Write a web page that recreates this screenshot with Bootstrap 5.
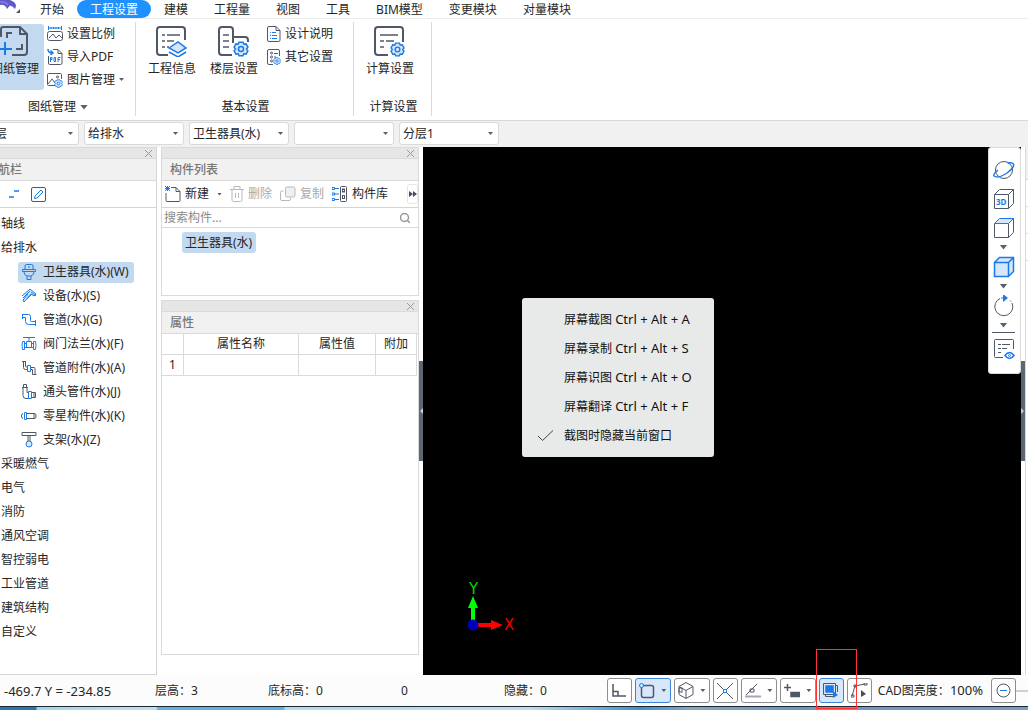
<!DOCTYPE html>
<html lang="zh-CN">
<head>
<meta charset="utf-8">
<meta name="viewport" content="width=device-width, initial-scale=1">
<title>工程设置</title>
<link href="https://cdn.jsdelivr.net/npm/bootstrap@5.3.0/dist/css/bootstrap.min.css" rel="stylesheet">
<script src="https://cdn.jsdelivr.net/npm/bootstrap@5.3.0/dist/js/bootstrap.bundle.min.js" defer></script>
<style>
:root{--ink:#505868;--blue:#1a7ae8;--edge:#dadada;--pick:#c2d9f0}
body{font:12px/18px "Noto Sans","Noto Sans CJK SC",sans-serif;color:#262626;background:#fff}
button{font:inherit;color:inherit;background:none;border:0;padding:0}
svg{display:block;flex:none;fill:none;stroke:var(--ink);stroke-width:1.5}
svg .b{stroke:var(--blue)}
svg .bf{stroke:var(--blue);fill:#d6e6fb}
.thin{stroke-width:1}
.caret{flex:none;width:5px;height:3px;background:#5a606b;clip-path:polygon(0 0,100% 0,50% 100%)}
.caret-lg{width:8px;height:5px}
.num{font-size:13px}
.colon{font-family:"Noto Sans CJK TC",sans-serif}

.tabs{height:19px;border-bottom:1px solid #ececec}
.tabs a{color:inherit;text-decoration:none;padding:0 13px;height:18px;line-height:19px}
.tabs a.on{background:#1e90ff;color:#fff;border-radius:9px}
.brand-box{width:27px}

.ribbon{height:102px;border-bottom:1px solid #d8d8d8}
.rgroup{margin:3px 0 4px;border-right:1px solid var(--edge)}
.rgroup-first{width:150px;margin-left:-14px}
.rgroup-mid{width:218px;padding-left:7px}
.rgroup-last{width:78px;padding-left:7px}
.rbody{height:76px}
.rlabel{height:18px;padding-right:5px}
.big{width:58px;height:66px;border-radius:3px;margin-top:2px}
.big svg{margin:1px 3px 3px 0}
.big.on{background:var(--pick)}
.small-btns{padding-left:3px}
.small-btn{height:23px;gap:4px}

.selbar{height:26px;background:#f1f1f1;gap:5px;padding-top:1px}
.pick{width:100px;position:relative;flex:none}
.pick-first{margin-left:-21px}
.pick select{width:100%;height:23px;font:inherit;color:inherit;appearance:none;background:#fff;border:1px solid var(--edge);border-radius:3px;padding:0 3px}
.pick .caret{position:absolute;right:6px;top:10px;pointer-events:none}

.workspace{min-height:0}
.navpane{width:157px;border-right:1px solid #d4d4d4;border-bottom:1px solid #d4d4d4}
.panebar{height:12px;background:#e6e6e6;border:solid var(--edge);border-width:1px 0;padding-right:4px}
.panebar svg{stroke:#999}
.panehead{height:22px;background:#f1f1f1;color:#777;border-bottom:1px solid var(--edge);padding-left:8px;font-weight:500}
.nav-title{margin-left:-22px}
.panetools{height:27px;border-bottom:1px solid #d4d4d4;padding-left:3px}
.navtools{padding-left:7px}
.tree{padding:4px 0;list-style:none;margin:0}
.tree ul{list-style:none;padding:0 0 0 18px;margin:0}
.tree li>span{display:flex;align-items:center;height:24px;padding-left:1px}
.tree ul li{display:flex;align-items:center;height:24px}
.tree a{display:flex;align-items:center;height:21px;padding:0 5px 0 3px;gap:6px;border-radius:3px;color:inherit;text-decoration:none}
.tree a.on{background:var(--pick)}
.midpane{width:258px;margin-left:4px}
.pane{border:solid var(--edge);border-width:0 1px 1px}
.parts{height:149px}
.dim{color:#a9a9a9}
.dim svg{stroke:#b9b9b9}
.search{height:20px;border-bottom:1px solid var(--edge)}
.search input{border:0;outline:0;font:inherit;padding:1px 2px 0;background:none;min-width:0}
.search input::placeholder{color:#8a8a8a;opacity:1}
.chip{background:var(--pick);border-radius:3px;height:21px;margin:4px 0 0 20px;padding:0 4px 0 3px;width:max-content;line-height:21px}
.props{flex:1;margin:4px 0 20px}
.props table{width:255px;table-layout:fixed;border-collapse:separate;border-spacing:0}
.props th,.props td{height:21px;border:solid var(--edge);border-width:0 1px 1px 0;text-align:center;font-weight:400;padding:0;line-height:20px}
.more{width:11px;height:20px;border:1px solid #e6e6e6;border-radius:3px}

.splitter{width:4px;background:#fff}
.splitter i{height:100px;background:#5d6772;display:flex;align-items:center}
.canvas{background:#000;min-width:0}
.viewbar{position:absolute;right:0;top:0;width:33px;height:227px;background:#fff;border:1px solid var(--edge);border-radius:3px;z-index:2;padding:7px 2px 0 0}
.viewbar hr{width:23px;margin:2px 0 1px;border-top:1px solid var(--ink);opacity:1}
.vb{height:29px}
.vc{height:10px}
.ctx{position:absolute;left:99px;top:151px;width:192px;background:#e8eae9;border-radius:3px;padding:7px 0;color:#111}
.ctx button{display:flex;align-items:center;width:100%;height:29px;padding-left:16px}
.ctx .tick{width:26px}
.axis{position:absolute;left:42px;bottom:44px}
.axis text{font:15px "DejaVu Sans",sans-serif;stroke:none}
.edgepane{width:3px;border-left:1px solid var(--edge);background:#fff}
.edgepane div{border-bottom:1px solid var(--edge)}
.edgepane .eh{height:33px;background:#f1f1f1}
.edgepane .er{height:27px}

.status{height:31px;background:#fcfcfc}
.sb{width:25px;height:25px;border:1px solid #8e8e8e;border-radius:3px;background:#fff;display:flex;align-items:center;justify-content:center}
.sb.wide{width:36px;gap:6px}
.sb.on{background:#d9e7fb;border-color:#3c85dc}
.sbs{gap:3px}
.tw-1{width:151px;padding-left:4px}
.tw-2{width:113px;padding-left:4px}
.tw-3{width:133px;padding-left:4px}
.tw-4{width:103px;padding-left:4px}
.bright{padding:0 5px 0 3px}
.track{width:12px;height:2px;background:#cfcfcf}
.hotbox{position:absolute;left:-3px;top:-29px;width:41px;height:60px;border:1px solid #f33;z-index:3;pointer-events:none}
.strip{height:4px;border-top:1px solid #1b2733;background:linear-gradient(90deg,#2f75a8 0,#2f75a8 36px,#a7d3e8 37px,#c5dfe9 156px,#63b1df 158px,#63b1df 284px,#b5dcec 285px,#bfdce8 530px,#3d93cb 640px,#86a8bd 690px,#6f96b8 800px,#7c9dbb 100%)}
</style>
</head>
<body>
<svg width="0" height="0" class="position-absolute" aria-hidden="true">
  <symbol id="gear" viewBox="0 0 16 16"><path class="bf" d="M6 1.200h4l.8 2 2.300-.300 1.800 3.300L13.500 8l1.400 1.800-1.800 3.300-2.300-.300-.8 2H6l-.8-2-2.300.300L1.100 9.800 2.500 8 1.100 6.200l1.800-3.300 2.300.300z"/><circle class="b" cx="8" cy="8" r="2.500"/></symbol>
  <symbol id="close" viewBox="0 0 7 7"><path d="M0 0l7 7M7 0L0 7"/></symbol>
</svg>
<div class="d-flex flex-column vh-100 overflow-hidden">

  <nav class="tabs d-flex flex-shrink-0">
    <div class="brand-box"><svg width="22" height="14"><path d="M0 0h10q6 2 6 6l-1 3q-2-3-5-3.500L7 9Q5 4 0 5z" fill="#5b5cc9" stroke="none"/><path d="M0 2q5-1 8 3" style="stroke:#8a7be0"/><path d="M20 9v4h-4z" fill="#555" stroke="none"/></svg></div>
    <a href="#">开始</a><a href="#" class="on">工程设置</a><a href="#">建模</a><a href="#">工程量</a><a href="#">视图</a><a href="#">工具</a><a href="#">BIM模型</a><a href="#">变更模块</a><a href="#">对量模块</a>
  </nav>

  <section class="ribbon d-flex flex-shrink-0">
    <div class="rgroup rgroup-first">
      <div class="rbody d-flex">
        <button class="big on d-flex flex-column align-items-center flex-shrink-0">
          <svg width="30" height="32"><path d="M2 12V4q0-2 2-2h17l7 7v18q0 3-3 3H13M21 2v7h7M8 13V8h5M23 19v5h-6" style="stroke-width:2"/><path class="b" d="M6 17v13M0 24h13" style="stroke-width:2"/></svg>
          图纸管理</button>
        <div class="small-btns">
          <button class="small-btn d-flex align-items-center">
            <svg width="16" height="16"><path class="b thin" d="M1.500 0v4M14.500 0v4M1 2h14M4 1v2M6.500 1v2M9 1v2M11.500 1v2"/><path class="thin" d="M2.500 5.500h11q2 0 2 2v5q0 2-2 2h-11q-2 0-2-2v-5q0-2 2-2zM2 12l4-4 3 4 3-3 3 3"/></svg>设置比例</button>
          <button class="small-btn d-flex align-items-center">
            <svg width="16" height="16"><path class="thin" d="M6 .500h5l4 4V14q0 1.500-1.500 1.500h-11Q1.500 15.500 1.500 14V7M11 .500v4h4"/><path class="b" d="M1 0q0 4 4 4M3.500 1.500L6 4 3.500 6"/><path class="b thin" d="M3.500 13V8.500h1.500v2H3.500M7 8.500v4h1.500v-4zM11 13V8.500h2.500M11 10.500h2"/></svg>导入PDF</button>
          <button class="small-btn d-flex align-items-center">
            <svg width="16" height="16"><path class="thin" d="M8 13.500H1.500q-1 0-1-1v-10q0-1 1-1h12q1 0 1 1V7M1 12l4-5 3 4 1-1"/><circle class="thin" cx="10.500" cy="5" r="1"/><use href="#gear" x="7" y="7" width="9" height="9"/></svg>图片管理<i class="caret"></i></button>
        </div>
      </div>
      <div class="rlabel d-flex align-items-center justify-content-center gap-1">图纸管理<i class="caret caret-lg"></i></div>
    </div>

    <div class="rgroup rgroup-mid">
      <div class="rbody d-flex">
        <button class="big d-flex flex-column align-items-center">
          <svg width="32" height="32"><path d="M13 30H5q-3 0-3-3V5q0-3 3-3h22q3 0 3 3v10" style="stroke-width:2"/><path d="M7 10h3M12 10h13M7 16h3M12 16h7M7 22h3M12 22h2"/><path class="bf" d="M14 23l9-6 8 6-8 5z"/><path class="b" d="M14 27l9 5 8-5"/></svg>
          工程信息</button>
        <button class="big d-flex flex-column align-items-center ms-1">
          <svg width="32" height="32"><path d="M15 30H5q-3 0-3-3V5q0-3 3-3h8q3 0 3 3v13M16 12h12q3 0 3 3v2" style="stroke-width:2"/><path d="M6 10h6M6 16h6M6 22h6"/><use href="#gear" x="16" y="16" width="16" height="16"/></svg>
          楼层设置</button>
        <div class="ps-1">
          <button class="small-btn d-flex align-items-center">
            <svg width="14" height="16"><path class="thin" d="M2 .500h7l4 4V14q0 1.500-1.500 1.500H2Q.5 15.500.5 14V2Q.5.500 2 .500zM9 .500v4h4"/><path class="b thin" d="M3 6.500h1M5 6.500h4M3 9.500h1M5 9.500h5M3 12.500h1M5 12.500h5"/></svg>设计说明</button>
          <button class="small-btn d-flex align-items-center">
            <svg width="14" height="16"><path class="thin" d="M6 15.500H2Q.5 15.500.5 14V2Q.5.500 2 .500h9q1.500 0 1.500 1.500v5M7 4.500h4M7 8h2"/><circle class="thin" cx="4.500" cy="4" r="1"/><circle class="thin" cx="4.500" cy="8" r="1"/><circle class="thin" cx="4.500" cy="12" r="1"/><use href="#gear" x="6" y="8" width="8" height="8"/></svg>其它设置</button>
        </div>
      </div>
      <div class="rlabel text-center">基本设置</div>
    </div>

    <div class="rgroup rgroup-last">
      <div class="rbody d-flex">
        <button class="big d-flex flex-column align-items-center">
          <svg width="32" height="32"><path d="M15 30H5q-3 0-3-3V5q0-3 3-3h22q3 0 3 3v12" style="stroke-width:2"/><path d="M7 10h18M7 16h4M13 16h8M7 22h4"/><use href="#gear" x="17" y="17" width="15" height="15"/></svg>
          计算设置</button>
      </div>
      <div class="rlabel text-center">计算设置</div>
    </div>
  </section>

  <section class="selbar d-flex flex-shrink-0">
    <div class="pick pick-first"><select aria-label="楼层"><option>楼层</option></select><i class="caret"></i></div>
    <div class="pick"><select aria-label="专业"><option>给排水</option></select><i class="caret"></i></div>
    <div class="pick"><select aria-label="构件类型"><option>卫生器具(水)</option></select><i class="caret"></i></div>
    <div class="pick"><select aria-label="构件"><option></option></select><i class="caret"></i></div>
    <div class="pick"><select aria-label="分层"><option>分层1</option></select><i class="caret"></i></div>
  </section>

  <main class="workspace d-flex flex-grow-1">
    <aside class="navpane flex-shrink-0 overflow-hidden">
      <div class="panebar d-flex align-items-center justify-content-end"><svg width="7" height="7" class="thin"><use href="#close"/></svg></div>
      <div class="panehead d-flex align-items-center"><span class="nav-title">导航栏</span></div>
      <div class="panetools navtools d-flex align-items-center">
        <svg width="16" height="16"><path class="b" d="M2 11h5M7 5h5"/></svg>
        <button class="ms-2" aria-label="编辑"><svg width="15" height="15"><rect class="thin" x=".5" y=".5" width="14" height="14" rx="1.500"/><path class="b thin" d="M3.500 11.500l.5-2.500 6-6 2 2-6 6z"/></svg></button>
      </div>
      <ul class="tree">
        <li><span>轴线</span></li>
        <li><span>给排水</span>
          <ul>
            <li><a href="#" class="on"><svg width="16" height="16" class="thin"><path class="b" d="M4 5V2Q4 .500 5.500 .500h5Q12 .500 12 2v3M1.500 5.500h13v2h-13zM3 8q0 3 3 4h4q3-1 3-4M6 12v3.500h4V12M7 3h2"/></svg>卫生器具(水)(W)</a></li>
            <li><a href="#"><svg width="16" height="16" class="thin"><path class="bf" d="M1 8l8-7 6 5-2 2-3-2-7 8-1-2 5-6"/><path class="b" d="M2 10l7-7M10 4l5 4M6 11l5-5"/></svg>设备(水)(S)</a></li>
            <li><a href="#"><svg width="16" height="16" class="thin"><path class="b" d="M1.500 2v5M1.500 2.500h6q2 0 2 2v4q0 1 1 1h4M1.500 5.500h3v4q0 3 3 3h7M14.500 8v6"/></svg>管道(水)(G)</a></li>
            <li><a href="#"><svg width="16" height="16" class="thin"><path class="b" d="M2 1.500h12M8 1.500v4M5.500 5.500h5v6h-5zM1.500 5.500h2v8h-2q-1-4 0-8zM12.500 5.500h2q1 4 0 8h-2zM3.500 7.500h2M10.500 7.500h2M3.500 11.500h9"/></svg>阀门法兰(水)(F)</a></li>
            <li><a href="#"><svg width="16" height="16" class="thin"><path d="M1 1.500h4M2.500 2v5.500q0 2 2 2h2M4.500 2v4q0 1 1 1h1M10 7.500h3q1 0 1 1v6h1.500M10 9.500h1.500v5H15"/><path class="b" d="M6.500 5.500h3v6h-3z"/></svg>管道附件(水)(A)</a></li>
            <li><a href="#"><svg width="16" height="16" class="thin"><path d="M2.500 .500h3v3h-3zM1 3.500h6M2 4v7.500q0 3 3 3h2.500M6 4v4.500h2M10.500 8.500h4v5h-4M13 8v6"/><path class="b" d="M7.500 7.500h3v7h-3z"/></svg>通头管件(水)(J)</a></li>
            <li><a href="#"><svg width="16" height="16" class="thin"><path d="M5 5.500h9q1 0 1 2.500t-1 2.500H5M13 5.500v5M2 5.500Q.5 5.500.5 8t1.500 2.500"/><path class="b" d="M3.500 4.500h2v7h-2z"/></svg>零星构件(水)(K)</a></li>
            <li><a href="#"><svg width="16" height="16" class="thin"><path d="M1 .500h14v3H1zM7 4v5M9 4v5"/><circle class="bf" cx="8" cy="12" r="3"/></svg>支架(水)(Z)</a></li>
          </ul>
        </li>
        <li><span>采暖燃气</span></li>
        <li><span>电气</span></li>
        <li><span>消防</span></li>
        <li><span>通风空调</span></li>
        <li><span>智控弱电</span></li>
        <li><span>工业管道</span></li>
        <li><span>建筑结构</span></li>
        <li><span>自定义</span></li>
      </ul>
    </aside>

    <section class="midpane d-flex flex-column flex-shrink-0">
      <div class="pane parts">
        <div class="panebar d-flex align-items-center justify-content-end"><svg width="7" height="7" class="thin"><use href="#close"/></svg></div>
        <div class="panehead d-flex align-items-center">构件列表</div>
        <div class="panetools d-flex align-items-center">
          <button class="d-flex align-items-center gap-1"><svg width="16" height="16" class="thin"><path d="M6 1.500h5l4 4v9q0 1-1 1H2q-1 0-1-1V7M11 1.500v4h4"/><path class="b" d="M0 0l5 5M5 0L0 5M2.500 0v5M0 2.500h5"/></svg>新建<i class="caret ms-1"></i></button>
          <button class="dim d-flex align-items-center gap-1 ms-2" disabled><svg width="14" height="16" class="thin"><path d="M0 3.500h14M4 3V.500h6V3M2 4v10q0 1.500 1.500 1.500h7q1.500 0 1.500-1.500V4M5.500 7v5M8.500 7v5"/></svg>删除</button>
          <button class="dim d-flex align-items-center gap-1 ms-2" disabled><svg width="16" height="16" class="thin"><rect x="5.500" y="1" width="9.500" height="10" rx="1.500" fill="#f0f0f0"/><path d="M3.500 5H2Q.5 5 .5 6.500V13q0 1.500 1.500 1.500h7q1.500 0 1.500-1.500v-1"/></svg>复制</button>
          <button class="d-flex align-items-center gap-1 ms-2"><svg width="16" height="16" class="thin"><rect x="8.500" y=".5" width="6" height="15" rx="1"/><rect x="10.500" y="3" width="2" height="3"/><rect x="10.500" y="9.500" width="2" height="3"/><path class="b" d="M0 1.500h2.500v2H0zM3 2.500h4M0 7h2.500v2H0zM3 8h4M0 12.500h2.500v2H0zM3 13.500h4"/></svg>构件库</button>
          <button class="more ms-auto d-flex align-items-center justify-content-center" aria-label="更多"><svg width="8" height="6"><path d="M0 0l4 3-4 3zM4 0l4 3-4 3z" fill="#464d5c" stroke="none"/></svg></button>
        </div>
        <div class="search d-flex align-items-center pe-2"><input class="flex-grow-1" type="text" placeholder="搜索构件..." aria-label="搜索构件"><svg width="10" height="10"><circle cx="4.500" cy="4.500" r="4" stroke="#999"/><path d="M7 7l3 3" stroke="#999"/></svg></div>
        <div class="chip">卫生器具(水)</div>
      </div>
      <div class="pane props">
        <div class="panebar d-flex align-items-center justify-content-end"><svg width="7" height="7" class="thin"><use href="#close"/></svg></div>
        <div class="panehead d-flex align-items-center">属性</div>
        <table>
          <colgroup><col style="width:22px"><col style="width:115px"><col style="width:77px"><col style="width:41px"></colgroup>
          <thead><tr><th></th><th>属性名称</th><th>属性值</th><th>附加</th></tr></thead>
          <tbody><tr><td>1</td><td></td><td></td><td></td></tr></tbody>
        </table>
      </div>
    </section>
    <div class="splitter flex-shrink-0 d-flex flex-column justify-content-center"><i><svg width="4" height="6"><path d="M4 0v6L1 3z" fill="#c8ccd2" stroke="none"/></svg></i></div>

    <section class="canvas flex-grow-1 position-relative">
      <div class="ctx">
        <button><span class="tick"></span><span>屏幕截图 <span class="num">Ctrl + Alt + A</span></span></button>
        <button><span class="tick"></span><span>屏幕录制 <span class="num">Ctrl + Alt + S</span></span></button>
        <button><span class="tick"></span><span>屏幕识图 <span class="num">Ctrl + Alt + O</span></span></button>
        <button><span class="tick"></span><span>屏幕翻译 <span class="num">Ctrl + Alt + F</span></span></button>
        <button><span class="tick"><svg width="15" height="11" class="thin"><path d="M0 6l4.500 4.500L15 .500" stroke="#444"/></svg></span>截图时隐藏当前窗口</button>
      </div>
      <svg class="axis" width="56" height="56"><path d="M8 50V30" style="stroke:#0f0;stroke-width:4"/><path d="M3 33l5-12 5 12z" fill="#0f0" stroke="none"/><path d="M8 50h22" style="stroke:#f00;stroke-width:4"/><path d="M26 45l12 5-12 5z" fill="#f00" stroke="none"/><circle cx="8" cy="50" r="5.500" fill="#00b" stroke="none"/><text x="4" y="19" fill="#0d0">Y</text><text x="39" y="55" fill="#e00">X</text></svg>
      <div class="viewbar d-flex flex-column align-items-center">
        <button class="vb" aria-label="动态观察"><svg width="22" height="22" class="thin"><circle cx="11" cy="11" r="8.500"/><path class="b" style="stroke-width:1.500" d="M5 11q-5 4-4 6 4 3 13-3 8-6 6.500-9-1-2-6-1"/></svg></button>
        <button class="vb" aria-label="三维"><svg width="22" height="22" class="thin"><path d="M1.500 6.500h14v14h-14zM1.500 6.500l5-5h14v14l-5 5M15.500 6.500l5-5"/><text x="3" y="17" font-size="8" font-weight="700" fill="#1a7ae8" stroke="none">3D</text></svg></button>
        <button class="vb" aria-label="俯视"><svg width="22" height="22" class="thin"><path d="M1.500 6.500v14h14v-14M20.500 1.500v14l-5 5"/><path class="bf" d="M1.500 6.500l5-5h14l-5 5z"/></svg></button>
        <span class="vc d-flex align-items-center"><i class="caret caret-lg"></i></span>
        <button class="vb" aria-label="着色"><svg width="22" height="22"><path class="bf" d="M1.500 6.500h14v14h-14zM1.500 6.500l5-5h14v14l-5 5M15.500 6.500l5-5"/></svg></button>
        <span class="vc d-flex align-items-center"><i class="caret caret-lg"></i></span>
        <button class="vb" aria-label="旋转"><svg width="22" height="22" class="thin"><path d="M7 3.500A9 9 0 1 0 19 8M17 5.500l1 1"/><path d="M10 -1l5 4-5 4z" fill="#1a7ae8" stroke="none"/><path class="b" d="M8 3h4"/></svg></button>
        <span class="vc d-flex align-items-center"><i class="caret caret-lg"></i></span>
        <hr>
        <button class="vb" aria-label="显示设置"><svg width="22" height="22" class="thin"><path d="M10 19.500H2.500q-1 0-1-1v-16q0-1 1-1h17q1 0 1 1V11M5 6.500h3M9 6.500h8M5 10.500h3M9 10.500h5M5 14.500h3"/><path class="b" style="stroke-width:1.500" d="M12 17.500q4.500-6 9 0-4.500 6-9 0z"/><circle class="b" cx="16.500" cy="17.500" r="1"/></svg></button>
      </div>
    </section>
    <div class="splitter flex-shrink-0 d-flex flex-column justify-content-center"><i><svg width="4" height="6"><path d="M0 0v6l3-3z" fill="#c8ccd2" stroke="none"/></svg></i></div>
    <div class="edgepane flex-shrink-0"><div class="eh"></div><div class="er"></div><div class="er"></div><div class="er"></div></div>
  </main>

  <footer class="status d-flex align-items-center flex-shrink-0">
    <span class="tw-1 num">-469.7 Y = -234.85</span>
    <span class="tw-2">层高<span class="colon">：</span>3</span>
    <span class="tw-3">底标高<span class="colon">：</span>0</span>
    <span class="tw-4">0</span>
    <span class="ps-1">隐藏<span class="colon">：</span>0</span>
    <div class="sbs d-flex align-items-center ms-auto">
      <button class="sb" aria-label="正交"><svg width="14" height="13"><path d="M1 0v12h13M1 7.500h5V12"/></svg></button>
      <button class="sb wide on" aria-label="捕捉"><svg width="16" height="16"><rect x="2.500" y="2.500" width="12" height="12" rx="2"/><circle class="bf thin" cx="2.500" cy="2.500" r="2"/></svg><i class="caret"></i></button>
      <button class="sb wide" aria-label="三维捕捉"><svg width="16" height="17" class="thin"><path d="M8 .500l7 4v8l-7 4-7-4v-8zM1 4.500l7 4 7-4M8 8.500v8"/><rect x="1" y="6" width="3" height="4"/></svg><i class="caret"></i></button>
      <button class="sb" aria-label="交点"><svg width="16" height="16" class="thin"><path d="M0 0l16 16M16 0L0 16"/><rect class="b" x="6.500" y="6.500" width="3" height="3" fill="#fff"/></svg></button>
      <button class="sb wide" aria-label="角度"><svg width="16" height="14" class="thin"><path d="M1 11L12 0M5 5h4v3H5z"/><path d="M0 12.500h16" stroke="#a3a8b0" stroke-width="2"/></svg><i class="caret"></i></button>
      <button class="sb wide" aria-label="动态输入"><svg width="16" height="14"><path d="M3.500 0v7M0 3.500h7"/><path d="M7 8.500h9v4H7z" fill="#505868"/></svg><i class="caret"></i></button>
      <div class="position-relative"><button class="sb on" aria-label="选择"><svg width="16" height="16"><path class="b" fill="#1a7ae8" d="M3 3h7v6H3z"/><path class="thin" d="M.5.500h12v11H.5zM2.500 12v1.500H10M12.500 2.500h2V9"/><path d="M10 8l5 4-5 3z" fill="#1a7ae8" stroke="none"/></svg></button><div class="hotbox"></div></div>
      <button class="sb" aria-label="折线"><svg width="17" height="15" class="thin"><path d="M1 13L4 3l10-2M0 12h3v2H0zM3 2h2v2H3zM13 0h3v2h-3z"/><path d="M10 7l5 4-5 3z" fill="#464d5c" stroke="none"/></svg></button>
      <span class="bright"><span>CAD图亮度<span class="colon">：</span></span><span class="num">100%</span></span>
      <div class="d-flex align-items-center"><button class="sb" aria-label="降低亮度"><svg width="15" height="15" class="thin"><circle cx="7.500" cy="7.500" r="6.500"/><path class="b" d="M4 7.500h7"/></svg></button><i class="track"></i></div>
    </div>
  </footer>
  <div class="strip flex-shrink-0"></div>
</div>
</body>
</html>
